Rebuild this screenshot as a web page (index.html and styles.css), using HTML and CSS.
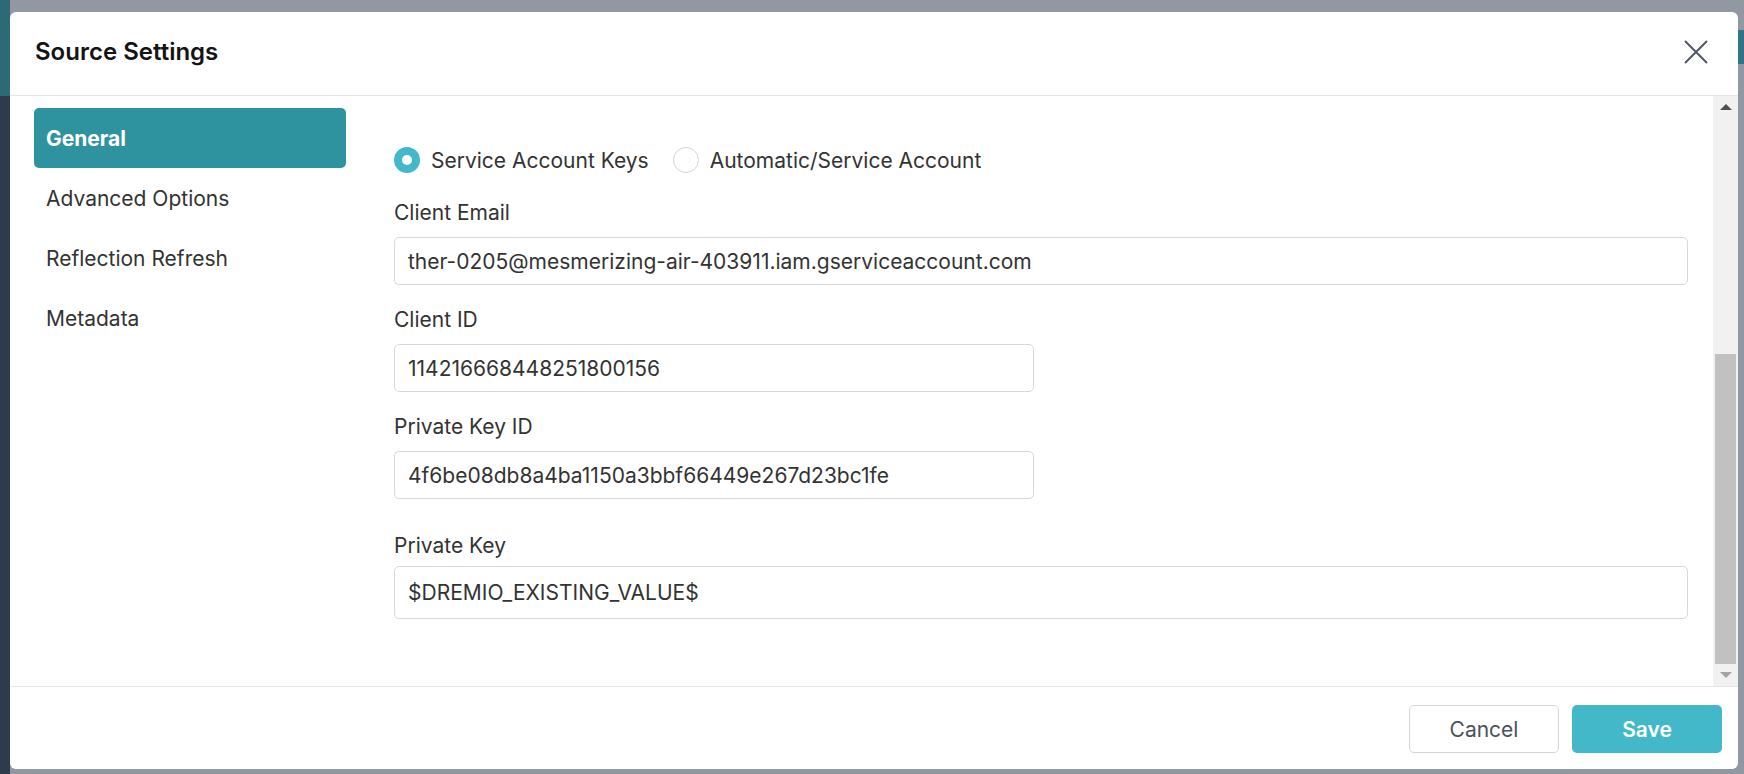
FILE: index.html
```html
<!DOCTYPE html>
<html lang="en">
<head>
<meta charset="utf-8">
<title>Source Settings</title>
<link rel="stylesheet" href="styles.css">
</head>
<body>
<div class="bg-left"></div>
<div class="stage">
  <div class="modal">
    <header class="modal-header">
      <h1 class="modal-title">Source Settings</h1>
      <button class="close-btn" aria-label="Close">
        <svg width="24" height="24" viewBox="0 0 24 24"><path d="M1 1L23 23M23 1L1 23" stroke="#4f5863" stroke-width="2" fill="none"/></svg>
      </button>
    </header>
    <div class="modal-body">
      <nav class="sidebar">
        <div class="nav-item active">General</div>
        <div class="nav-item">Advanced Options</div>
        <div class="nav-item">Reflection Refresh</div>
        <div class="nav-item">Metadata</div>
      </nav>
      <div class="content">
        <div class="radio-row">
          <label class="radio"><span class="radio-dot checked"></span><span>Service Account Keys</span></label>
          <label class="radio"><span class="radio-dot"></span><span>Automatic/Service Account</span></label>
        </div>
        <div class="field">
          <div class="field-label">Client Email</div>
          <div class="input wide">ther-0205@mesmerizing-air-403911.iam.gserviceaccount.com</div>
        </div>
        <div class="field">
          <div class="field-label">Client ID</div>
          <div class="input half">114216668448251800156</div>
        </div>
        <div class="field">
          <div class="field-label">Private Key ID</div>
          <div class="input half">4f6be08db8a4ba1150a3bbf66449e267d23bc1fe</div>
        </div>
        <div class="field field-key">
          <div class="field-label">Private Key</div>
          <div class="input wide tall">$DREMIO_EXISTING_VALUE$</div>
        </div>
      </div>
      <div class="scrollbar">
        <div class="sb-btn"><span class="arrow-up"></span></div>
        <div class="sb-track"><div class="sb-thumb"></div></div>
        <div class="sb-btn"><span class="arrow-down"></span></div>
      </div>
    </div>
    <footer class="modal-footer">
      <button class="btn btn-cancel">Cancel</button>
      <button class="btn btn-save">Save</button>
    </footer>
  </div>
</div>
<div class="bg-right"></div>
</body>
</html>
```

FILE: styles.css
```css
* { box-sizing: border-box; }
html, body { margin: 0; padding: 0; }
body {
  width: 1744px;
  height: 774px;
  overflow: hidden;
  display: flex;
  background: #9198a1;
  font-family: Inter, "Noto Sans", "Liberation Sans", sans-serif;
  color: #333;
}
.bg-left {
  width: 10px;
  height: 774px;
  background: linear-gradient(#2c6b76 0, #2c6b76 96px, #2e3b4c 96px);
}
.bg-right {
  width: 6px;
  height: 774px;
  background: linear-gradient(#9198a1 0, #9198a1 30px, #2f7582 30px, #2f7582 64px, #9198a1 64px);
}
.stage {
  width: 1728px;
  padding-top: 12px;
}
.modal {
  width: 1728px;
  height: 757px;
  background: #fff;
  border-radius: 6px;
  display: flex;
  flex-direction: column;
  overflow: hidden;
}
.modal-header {
  height: 84px;
  flex: none;
  border-bottom: 1px solid #e4e5e7;
  display: flex;
  align-items: center;
  justify-content: space-between;
  padding: 0 30px 4px 25px;
}
.modal-title {
  margin: 0;
  font-size: 24px;
  font-weight: 600;
  color: #141414;
}
.close-btn {
  border: 0;
  background: none;
  padding: 0;
  width: 24px;
  height: 24px;
  display: flex;
}
.modal-body {
  height: 590px;
  flex: none;
  display: flex;
}
.sidebar {
  width: 312px;
  margin-left: 24px;
  padding-top: 12px;
  flex: none;
}
.nav-item {
  height: 60px;
  display: flex;
  align-items: center;
  padding-left: 12px;
  font-size: 21px;
  color: #333;
  border-radius: 5px;
}
.nav-item.active {
  background: #2e939f;
  color: #fff;
  font-weight: 700;
}
.content {
  flex: 1;
  padding: 51px 25px 0 48px;
}
.radio-row {
  display: flex;
  align-items: center;
  gap: 24px;
  height: 26px;
}
.radio {
  display: flex;
  align-items: center;
  gap: 11px;
  font-size: 21px;
  color: #333;
}
.radio-dot {
  width: 26px;
  height: 26px;
  border-radius: 50%;
  border: 1px solid #d4d5d8;
  background: #fff;
  flex: none;
}
.radio-dot.checked {
  border: 8px solid #43b8c9;
}
.field { margin-top: 27px; }
.field + .field { margin-top: 22px; }
.field-label {
  font-size: 21px;
  line-height: 25px;
  margin-bottom: 12px;
  color: #333;
}
.input {
  height: 48px;
  border: 1px solid #d6d8dc;
  border-radius: 5px;
  padding: 0 13px;
  display: flex;
  align-items: center;
  font-size: 21px;
  color: #333;
  white-space: nowrap;
}
.input.half { width: 640px; }
.input.tall { height: 53px; }
.field.field-key { margin-top: 34px; }
.field-key .field-label { margin-bottom: 8px; }
.scrollbar {
  width: 25px;
  flex: none;
  background: #f1f1f1;
  display: flex;
  flex-direction: column;
}
.sb-btn {
  height: 22px;
  display: flex;
  align-items: center;
  justify-content: center;
}
.arrow-up {
  width: 0; height: 0;
  border-left: 6px solid transparent;
  border-right: 6px solid transparent;
  border-bottom: 6px solid #505050;
}
.arrow-down {
  width: 0; height: 0;
  border-left: 6px solid transparent;
  border-right: 6px solid transparent;
  border-top: 6px solid #a3a3a3;
}
.sb-track {
  flex: 1;
  display: flex;
  flex-direction: column;
  justify-content: flex-end;
  padding: 0 2px;
}
.sb-thumb {
  height: 310px;
  background: #c1c1c1;
}
.modal-footer {
  flex: 1;
  border-top: 1px solid #e4e5e7;
  display: flex;
  justify-content: flex-end;
  align-items: flex-start;
  gap: 13px;
  padding: 18px 16px 0 0;
}
.btn {
  height: 48px;
  width: 150px;
  border-radius: 5px;
  font-family: inherit;
  font-size: 21px;
}
.btn-cancel {
  background: #fff;
  border: 1px solid #d3d5d9;
  color: #4a525c;
}
.btn-save {
  background: #43b8c9;
  border: 0;
  color: #fff;
  font-weight: 600;
}
```
